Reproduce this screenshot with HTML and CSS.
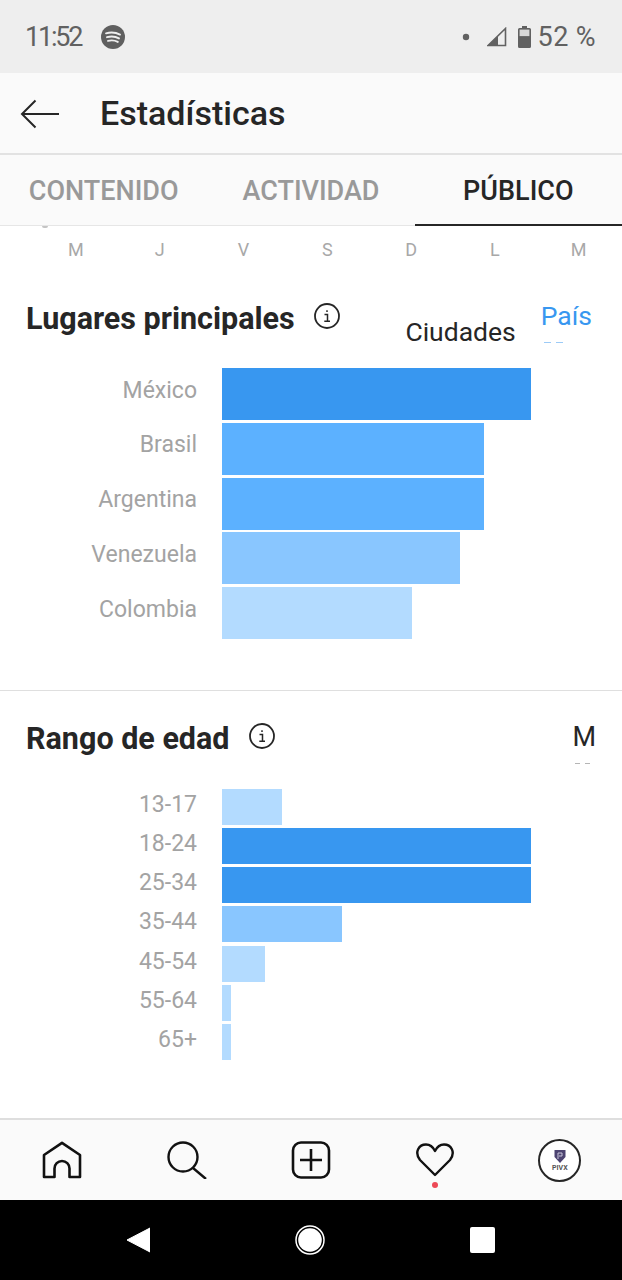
FILE: index.html
```html
<!DOCTYPE html>
<html>
<head>
  <meta charset="utf-8">
  <title>Estadísticas</title>
  <meta name="viewport" content="width=device-width, initial-scale=1.0">
  <link rel="stylesheet" href="styles.css">
</head>
<body>
  <div class="status">
    <span class="status-time">11:52</span>
    <svg class="spotify" viewBox="0 0 24 24" width="24" height="24">
      <circle cx="12" cy="12" r="12" fill="#5f5f5f"/>
      <path d="M5 8.300c4.600-1.300 9.800-1 14 1.300M6 12.200c4-1.100 8.400-.8 12 1.200M7 15.900c3.300-.9 6.800-.6 9.800 1" fill="none" stroke="#eee" stroke-width="1.900" stroke-linecap="round"/>
    </svg>
    <span class="status-right">
      <svg viewBox="0 0 8 8" width="8" height="8"><circle cx="4" cy="4" r="3.200" fill="#616161"/></svg>
      <svg class="signal" viewBox="0 0 20 20" width="20" height="20"><path d="M1 18.500 18.500 1.500v17z" fill="none" stroke="#616161" stroke-width="1.600"/><path d="M1 18.500 11 9v9.500z" fill="#616161"/></svg>
      <svg class="battery" viewBox="0 0 13 22" width="13" height="22"><path d="M4 0h5v2h2.500A1.500 1.500 0 0 1 13 3.500V20.500A1.500 1.500 0 0 1 11.500 22h-10A1.500 1.500 0 0 1 0 20.500V3.500A1.500 1.500 0 0 1 1.500 2H4z" fill="#616161"/><rect x="1.600" y="3.600" width="9.800" height="6.500" fill="#d8d8d8"/></svg>
      <span class="status-pct">52 %</span>
    </span>
  </div>

  <div class="header">
    <svg class="back" viewBox="0 0 40 30" width="40" height="30">
      <path d="M39 15H2M15.500 1.500 2 15l13.500 13.500" fill="none" stroke="#262626" stroke-width="2"/>
    </svg>
    <h1>Estadísticas</h1>
  </div>

  <div class="tabs">
    <div class="tab">CONTENIDO</div>
    <div class="tab">ACTIVIDAD</div>
    <div class="tab active">PÚBLICO</div>
  </div>

  <div class="content">
    <div class="sliver"><i></i></div>
    <div class="days">
      <span>M</span><span>J</span><span>V</span><span>S</span><span>D</span><span>L</span><span>M</span>
    </div>

    <div class="section places">
      <div class="section-head">
        <h2>Lugares principales</h2>
        <svg class="info" viewBox="0 0 26 26" width="26" height="26">
          <circle cx="13" cy="13" r="12" fill="none" stroke="#262626" stroke-width="1.800"/>
          <path d="M10.500 11.500H13.500V18M10.300 18.300H16M13 7.200v1.800" fill="none" stroke="#262626" stroke-width="1.500"/>
        </svg>
        <span class="opt-city">Ciudades</span>
        <div class="opt-country">
          <span>País</span>
          <div class="ticks blue"><i></i><i></i></div>
        </div>
      </div>
      <div class="chart">
        <span class="chart-label">México</span><div class="bar c1" style="width:309px"></div>
        <span class="chart-label">Brasil</span><div class="bar c2" style="width:262px"></div>
        <span class="chart-label">Argentina</span><div class="bar c2" style="width:262px"></div>
        <span class="chart-label">Venezuela</span><div class="bar c3" style="width:238px"></div>
        <span class="chart-label">Colombia</span><div class="bar c4" style="width:190px"></div>
      </div>
    </div>

    <div class="section ages">
      <div class="section-head">
        <h2>Rango de edad</h2>
        <svg class="info" viewBox="0 0 26 26" width="26" height="26">
          <circle cx="13" cy="13" r="12" fill="none" stroke="#262626" stroke-width="1.800"/>
          <path d="M10.500 11.500H13.500V18M10.300 18.300H16M13 7.200v1.800" fill="none" stroke="#262626" stroke-width="1.500"/>
        </svg>
        <div class="opt-gender">
          <span>M</span>
          <div class="ticks grey"><i></i><i></i></div>
        </div>
      </div>
      <div class="chart">
        <span class="chart-label">13-17</span><div class="bar c4" style="width:60px"></div>
        <span class="chart-label">18-24</span><div class="bar c1" style="width:309px"></div>
        <span class="chart-label">25-34</span><div class="bar c1" style="width:309px"></div>
        <span class="chart-label">35-44</span><div class="bar c3" style="width:120px"></div>
        <span class="chart-label">45-54</span><div class="bar c4" style="width:43px"></div>
        <span class="chart-label">55-64</span><div class="bar c4" style="width:9px"></div>
        <span class="chart-label">65+</span><div class="bar c4" style="width:9px"></div>
      </div>
    </div>
  </div>

  <div class="nav">
    <div class="nav-item">
      <svg viewBox="0 0 40 38" width="40" height="38"><path d="M2 36V14L20 1.800 38 14V36H27.500V27.500A7.500 7.500 0 0 0 12.500 27.500V36z" fill="none" stroke="#111" stroke-width="2.600" stroke-linejoin="round"/></svg>
    </div>
    <div class="nav-item">
      <svg viewBox="0 0 40 38" width="40" height="38"><circle cx="16" cy="16" r="14.500" fill="none" stroke="#111" stroke-width="2.400"/><path d="M26 27 39 38" stroke="#111" stroke-width="2.400"/></svg>
    </div>
    <div class="nav-item">
      <svg viewBox="0 0 40 38" width="40" height="38"><rect x="2" y="1.500" width="36" height="35" rx="8" fill="none" stroke="#111" stroke-width="2.600"/><path d="M9 19H31M20 8V30" stroke="#111" stroke-width="2.600"/></svg>
    </div>
    <div class="nav-item heart">
      <svg viewBox="0 0 40 34" width="40" height="34"><path d="M20 32 5 17C-1 9 4 1.500 11 1.500 15 1.500 18 4 20 8 22 4 25 1.500 29 1.500 36 1.500 41 9 35 17z" fill="none" stroke="#111" stroke-width="2.400" stroke-linejoin="round"/></svg>
      <span class="heart-dot"></span>
    </div>
    <div class="nav-item">
      <div class="avatar">
        <svg viewBox="0 0 14 14" width="14" height="14"><path d="M1.500 1h11v7L7 14 1.500 8z" fill="#4c4370"/><path d="M5 10V4h4v3H6" fill="none" stroke="#c9c6da" stroke-width="1"/></svg>
        <span class="avatar-name">PIVX</span>
      </div>
    </div>
  </div>

  <div class="android">
    <svg viewBox="0 0 24 26" width="24" height="26"><path d="M24 1v24L1 13z" fill="#fff" stroke="#fff" stroke-linejoin="round"/></svg>
    <svg viewBox="0 0 30 30" width="30" height="30"><circle cx="15" cy="15" r="14" fill="none" stroke="#fff" stroke-width="1.500"/><circle cx="15" cy="15" r="11.800" fill="#fff"/></svg>
    <div class="android-square"></div>
  </div>
</body>
</html>
```

FILE: styles.css
```css
* { box-sizing: border-box; }
body { margin: 0; height: 1280px; overflow: hidden; background: #fff; color: #262626; font-family: Roboto, "Liberation Sans", sans-serif; display: flex; flex-direction: column; }

.status { height: 73px; flex: none; background: #eeeeee; color: #616161; display: flex; align-items: center; padding: 0 26px; font-size: 27px; }
.status-time { letter-spacing: -2.200px; margin-left: -1px; }
.spotify { margin-left: 20px; }
.status-right { margin-left: auto; display: flex; align-items: center; }
.signal { margin-left: 17px; }
.battery { margin-left: 11px; }
.status-pct { margin-left: 7px; letter-spacing: .4px; }

.header { height: 82px; flex: none; background: #fafafa; border-bottom: 2px solid #e2e2e2; display: flex; align-items: center; padding-left: 20px; }
.back { margin-top: 2px; }
.header h1 { margin: 0 0 0 40px; font-size: 34px; font-weight: 500; color: #262626; }

.tabs { height: 71px; flex: none; background: #fafafa; display: grid; grid-template-columns: repeat(3, 1fr); border-bottom: 1px solid #e6e6e6; }
.tab { display: flex; align-items: center; justify-content: center; padding-top: 2px; font-size: 27px; font-weight: 500; color: #999; }
.tab.active { color: #262626; border-bottom: 2px solid #262626; margin-bottom: -1px; }

.content { flex: 1; min-height: 0; background: #fff; display: flex; flex-direction: column; }
.sliver { height: 3px; padding-left: 42px; }
.sliver i { display: block; width: 6px; height: 2px; background: #c4c4c4; border-radius: 0 0 3px 3px; }
.days { height: 41px; flex: none; display: grid; grid-template-columns: repeat(7, 83.800px); padding-left: 34px; align-items: center; font-size: 18px; color: #a8a8a8; }
.days span { text-align: center; }

.section { display: flex; flex-direction: column; }
.places { height: 421px; border-bottom: 1px solid #dfdfdf; padding-top: 29px; }
.ages { height: 430px; padding-top: 28px; border-bottom: 2px solid #dedede; }

.section-head { flex: none; display: flex; align-items: flex-start; padding: 0 26px; }
.places .section-head { height: 69px; }
.ages .section-head { height: 70px; }
.section-head h2 { margin: 0; font-size: 30.500px; line-height: 40px; font-weight: 700; color: #262626; }
.info { margin: 4px 0 0 19px; flex: none; }
.opt-city { margin: 15px 0 0 auto; font-size: 26.500px; line-height: 36px; color: #262626; }
.opt-country { margin: 0 4px 0 25px; font-size: 26.500px; line-height: 34px; color: #3897f0; }
.opt-gender { margin: 0 0 0 auto; font-size: 27px; line-height: 36px; color: #262626; }
.ticks { display: flex; gap: 5px; margin: 9px 0 0 3px; }
.ticks i { width: 7px; height: 1px; }
.ticks.blue i { background: #9ccbf7; }
.ticks.grey i { width: 5px; background: #b5b5b5; }
.ages .ticks { margin-top: 8px; }

.chart { display: grid; grid-template-columns: 197px auto; justify-content: start; column-gap: 25px; }
.places .chart { row-gap: 2.800px; grid-auto-rows: 52px; }
.ages .chart { row-gap: 3.300px; grid-auto-rows: 36px; }
.chart-label { display: flex; align-items: center; justify-content: flex-end; font-size: 23px; color: #a3a3a3; }
.places .chart-label { padding-bottom: 8px; }
.ages .chart-label { padding-bottom: 5px; }
.bar { height: 100%; }
.c1 { background: #3897f0; }
.c2 { background: #5cb1ff; }
.c3 { background: #89c6ff; }
.c4 { background: #b3dbff; }

.nav { height: 80px; flex: none; background: #fafafa; display: grid; grid-template-columns: repeat(5, 1fr); align-items: center; }
.nav-item { display: flex; justify-content: center; align-items: center; }
.heart { position: relative; }
.heart-dot { position: absolute; left: 50%; bottom: -11px; width: 6px; height: 6px; margin-left: -3px; border-radius: 50%; background: #ed4956; }
.avatar { width: 43px; height: 43px; border: 2px solid #262626; border-radius: 50%; background: #fff; display: flex; flex-direction: column; align-items: center; justify-content: center; }
.avatar-name { font-size: 7px; line-height: 8px; font-weight: 700; color: #555; margin-top: 1px; }

.android { height: 80px; flex: none; background: #000; display: flex; align-items: center; gap: 145px; padding-left: 126px; }
.android-square { width: 25px; height: 26px; background: #fff; border-radius: 2px; }
```
